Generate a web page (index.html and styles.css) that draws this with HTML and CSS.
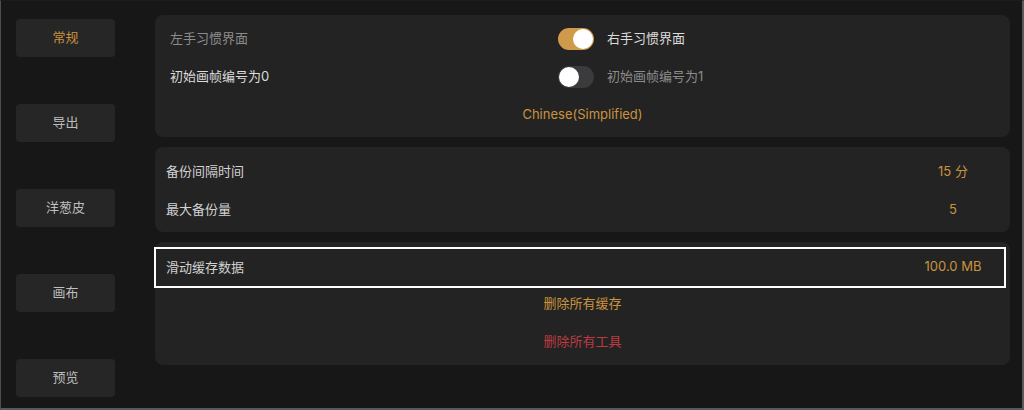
FILE: index.html
```html
<!DOCTYPE html>
<html lang="zh-CN">
<head>
<meta charset="utf-8">
<title>设置</title>
<link rel="stylesheet" href="styles.css">
</head>
<body>
<div class="frame">
  <nav class="sidebar">
    <div class="nav-btn active">常规</div>
    <div class="nav-btn">导出</div>
    <div class="nav-btn">洋葱皮</div>
    <div class="nav-btn">画布</div>
    <div class="nav-btn">预览</div>
  </nav>
  <main class="main">
    <section class="panel panel-general">
      <div class="opt-row">
        <span class="opt-label dim">左手习惯界面</span>
        <span class="switch on"><span class="thumb"></span></span>
        <span class="opt-label">右手习惯界面</span>
      </div>
      <div class="opt-row">
        <span class="opt-label">初始画帧编号为0</span>
        <span class="switch"><span class="thumb"></span></span>
        <span class="opt-label dim">初始画帧编号为1</span>
      </div>
      <div class="center-row gold">Chinese(Simplified)</div>
    </section>
    <section class="panel panel-backup">
      <div class="kv-row">
        <span class="kv-label">备份间隔时间</span>
        <span class="kv-value">15 分</span>
      </div>
      <div class="kv-row">
        <span class="kv-label">最大备份量</span>
        <span class="kv-value">5</span>
      </div>
    </section>
    <section class="panel panel-cache">
      <div class="kv-row highlight">
        <span class="kv-label">滑动缓存数据</span>
        <span class="kv-value">100.0 MB</span>
      </div>
      <div class="actions">
        <div class="center-row gold">删除所有缓存</div>
        <div class="center-row red">删除所有工具</div>
      </div>
    </section>
  </main>
</div>
</body>
</html>
```
FILE: styles.css
```css
* { box-sizing: border-box; }
html, body { margin: 0; padding: 0; background: #161616; }
body {
  font-family: Inter, "Noto Sans CJK SC", sans-serif;
  font-size: 13px;
  color: #d6d6d6;
}
.frame {
  width: 1024px;
  height: 410px;
  display: flex;
  background: #171717;
  border-left: 1px solid #4e4e4e;
  border-right: 2px solid #5a5a5a;
  border-bottom: 2px solid #5a5a5a;
  border-top: 1px solid #1c1c1c;
}
.sidebar {
  width: 154px;
  flex: none;
  padding: 18px 0 0 15px;
  display: flex;
  flex-direction: column;
  gap: 47px;
}
.nav-btn {
  width: 99px;
  height: 38px;
  border-radius: 4px;
  background: #262626;
  color: #bdbdbd;
  display: flex;
  align-items: center;
  justify-content: center;
  padding-bottom: 3px;
}
.nav-btn.active { color: #c9913d; }
.main {
  width: 855px;
  padding-top: 14px;
  display: flex;
  flex-direction: column;
  gap: 10px;
}
.panel {
  background: #232323;
  border-radius: 8px;
}
.panel-general { height: 122px; padding: 5px 0 3px 15px; }
.opt-row {
  height: 38px;
  display: flex;
  align-items: center;
}
.opt-row .opt-label:first-child { width: 388px; }
.opt-label { color: #dcdcdc; padding-bottom: 3px; }
.opt-label.dim { color: #8c8c8c; }
.switch {
  width: 36px;
  height: 22px;
  border-radius: 11px;
  background: #3b3b3d;
  margin-right: 13px;
  padding: 1px;
  display: flex;
  justify-content: flex-start;
}
.switch.on { background: #cf9b4b; justify-content: flex-end; }
.thumb {
  width: 20px;
  height: 20px;
  border-radius: 50%;
  background: #ffffff;
}
.center-row {
  height: 38px;
  display: flex;
  align-items: center;
  justify-content: center;
  padding-bottom: 3px;
}
.panel-general .center-row { margin-left: -15px; }
.gold { color: #c9933f; }
.red { color: #bd3a42; }
.panel-backup { height: 85px; padding: 6px 0 3px 0; }
.kv-row {
  height: 38px;
  display: flex;
  align-items: center;
  justify-content: space-between;
  padding: 0 17px 0 11px;
}
.kv-label, .kv-value { padding-bottom: 3px; }
.kv-label { color: #d2d2d2; }
.kv-value { width: 80px; text-align: center; color: #c9933f; }
.panel-cache { height: 123px; padding-top: 5px; }
.kv-row.highlight {
  height: 41px;
  margin: 0 4px 0 -1px;
  border: 2px solid #ffffff;
  padding: 0 11px 0 10px;
}
.actions { margin-top: -3px; }
```
